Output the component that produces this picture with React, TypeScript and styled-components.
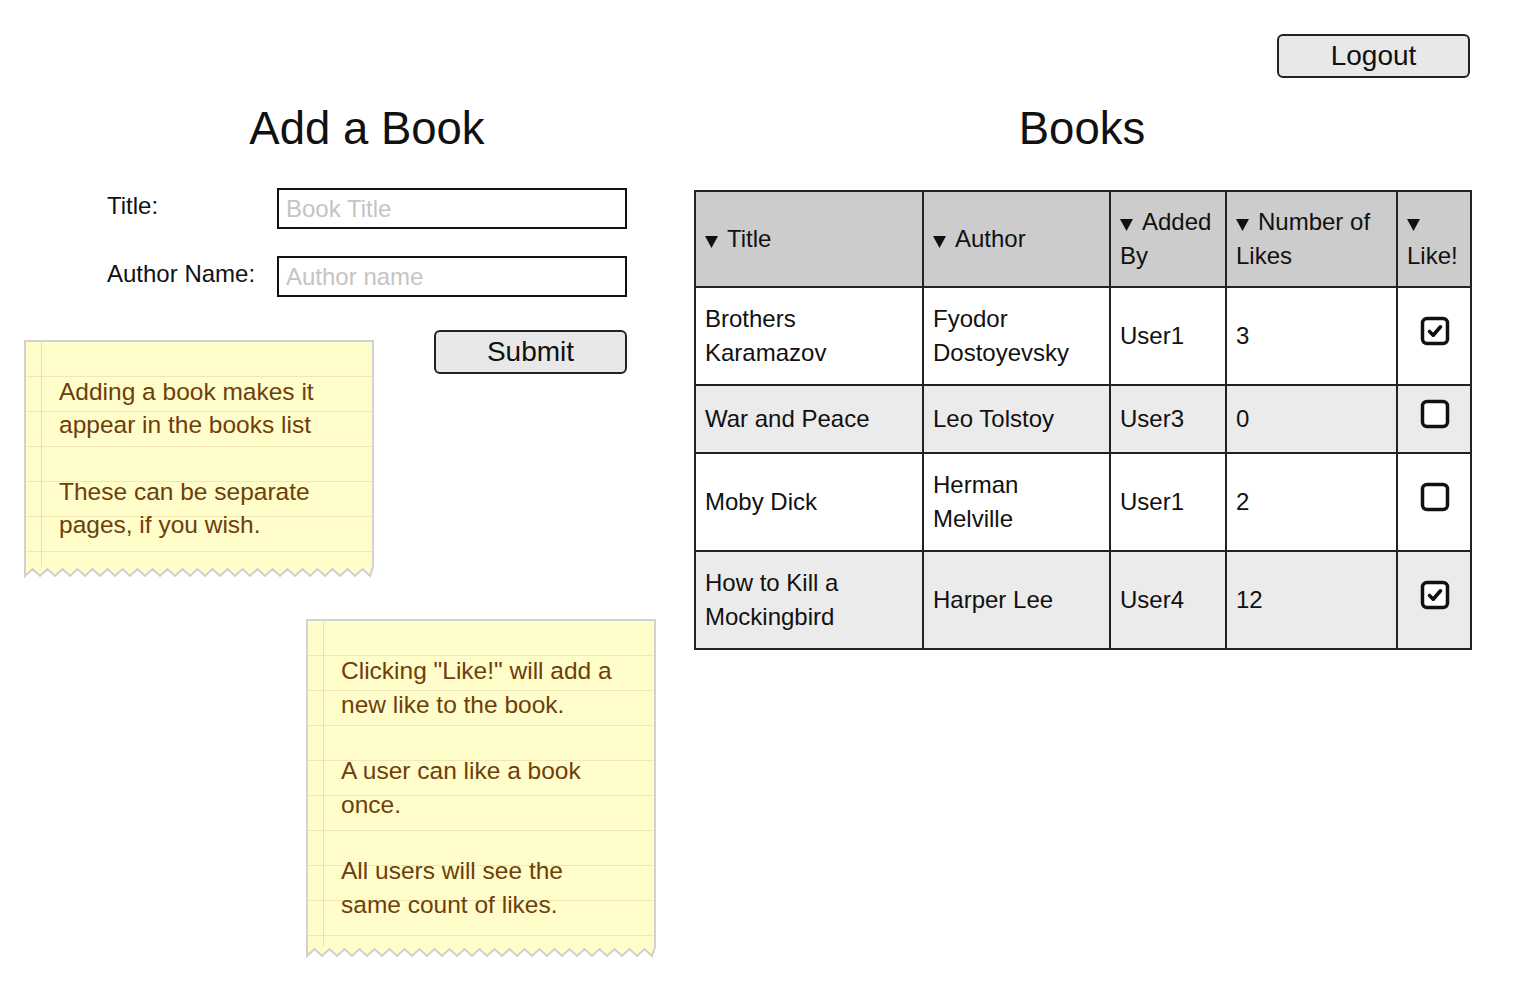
import React from 'react';
import styled, { createGlobalStyle } from 'styled-components';

const GlobalStyle = createGlobalStyle`
  body {
    margin: 0;
    background: #ffffff;
    color: #111111;
    font-family: "Liberation Sans", Arial, sans-serif;
  }
`;

const Page = styled.div`
  padding: 34px 55px 30px 24px;
`;

const TopBar = styled.div`
  display: flex;
  justify-content: flex-end;
`;

const Button = styled.button<{ $width: number }>`
  width: ${(p) => p.$width}px;
  height: 44px;
  background: #e8e8e8;
  border: 2px solid #222222;
  border-radius: 6px;
  font-family: inherit;
  font-size: 28px;
  color: #111111;
  padding: 0;
  cursor: pointer;
`;

const Columns = styled.div`
  display: flex;
  gap: 38px;
  align-items: flex-start;
`;

const LeftColumn = styled.section`
  width: 632px;
  display: flex;
  flex-direction: column;
`;

const RightColumn = styled.section`
  width: 776px;
  display: flex;
  flex-direction: column;
`;

const Heading = styled.h1<{ $inset?: number }>`
  margin: 25px 0 0;
  padding-left: ${(p) => p.$inset ?? 0}px;
  width: ${(p) => (p.$inset ? '520px' : 'auto')};
  box-sizing: content-box;
  font-size: 45.5px;
  line-height: 52px;
  font-weight: normal;
  text-align: center;
`;

const Form = styled.div`
  margin: 33px 0 0 83px;
  display: grid;
  grid-template-columns: 170px 350px;
  row-gap: 27px;
  align-items: center;
`;

const Label = styled.label`
  font-size: 24px;
  line-height: 28px;
  margin-top: -5px;
`;

const Input = styled.input`
  box-sizing: border-box;
  height: 41px;
  width: 100%;
  border: 2px solid #111111;
  border-radius: 0;
  padding: 0 7px;
  font-family: inherit;
  font-size: 24px;
  color: #111111;
  outline: none;

  &::placeholder {
    color: #c4c4c4;
  }
`;

const NoteRow = styled.div`
  margin-top: 33px;
  padding-right: 29px;
  display: flex;
  justify-content: space-between;
  align-items: flex-start;
`;

const Note = styled.div<{ $top: number; $left?: number }>`
  width: 350px;
  margin-top: ${(p) => p.$top}px;
  margin-left: ${(p) => p.$left ?? 0}px;
  display: flex;
  flex-direction: column;
`;

const NoteBody = styled.div`
  border: 2px solid #d2d2d2;
  border-bottom: none;
  padding: 33px 35px 26px 33px;
  background-color: #fffdc9;
  background-image:
    linear-gradient(to right, transparent 0 15px, #f6dcaa 15px 16px, transparent 16px),
    repeating-linear-gradient(to bottom, transparent 0 34px, #efe7b6 34px 35px);
  color: #6e3e0c;
  font-size: 24.5px;
  line-height: 33.3px;
`;

const NoteLine = styled.p<{ $gap?: boolean }>`
  margin: ${(p) => (p.$gap ? '33.3px' : '0')} 0 0;
`;

const Table = styled.table`
  margin-top: 35px;
  width: 776px;
  table-layout: fixed;
  border-collapse: collapse;
  border: 2px solid #222222;
  font-size: 24px;
  line-height: 34px;
`;

const HeadCell = styled.th`
  background: #cccccc;
  border: 2px solid #222222;
  padding: 13px 6px 13px 9px;
  text-align: left;
  font-weight: normal;
  vertical-align: middle;
`;

const Row = styled.tr<{ $shaded: boolean }>`
  background: ${(p) => (p.$shaded ? '#ebebeb' : '#ffffff')};
`;

const Cell = styled.td<{ $center?: boolean }>`
  border: 2px solid #222222;
  padding: 14px 8px 14px 9px;
  height: 38px;
  vertical-align: middle;
  text-align: ${(p) => (p.$center ? 'center' : 'left')};
`;

const CaretIcon = styled.svg`
  width: 13px;
  height: 12px;
  margin-right: 9px;
  vertical-align: -1px;
`;

const CheckIcon = styled.svg`
  display: block;
  margin: -10px auto 0;
  width: 30px;
  height: 30px;
`;

const ZigzagSvg = styled.svg`
  display: block;
`;

const Caret = () => (
  <CaretIcon viewBox="0 0 13 12">
    <polygon points="0,0 13,0 6.5,12" fill="#111" />
  </CaretIcon>
);

const Check = ({ checked }: { checked: boolean }) => (
  <CheckIcon viewBox="0 0 30 30">
    <rect x="2.5" y="2.5" width="25" height="25" rx="4.5" fill="#fff" stroke="#111" strokeWidth="3.5" />
    {checked && (
      <path d="M9.5 15.5 L13.2 19.2 L20.5 10.8" fill="none" stroke="#111" strokeWidth="3.6" strokeLinecap="round" strokeLinejoin="round" />
    )}
  </CheckIcon>
);

const Zigzag = ({ width }: { width: number }) => {
  const step = 15;
  const pts: string[] = [];
  for (let x = 0; x <= width; x += step / 2) {
    const down = Math.round(x / (step / 2)) % 2 === 0;
    pts.push(`${x + 1},${down ? 9 : 2}`);
  }
  const edge = `1,0 ${pts.join(' ')} ${width - 1},0`;
  return (
    <ZigzagSvg width={width} height={11} viewBox={`0 0 ${width} 11`}>
      <polygon points={`0,0 ${pts.join(' ')} ${width},0`} fill="#fffdc9" />
      <polyline points={edge} fill="none" stroke="#cfcfcf" strokeWidth="2" />
    </ZigzagSvg>
  );
};

const books = [
  { title: 'Brothers Karamazov', author: 'Fyodor Dostoyevsky', by: 'User1', likes: 3, liked: true },
  { title: 'War and Peace', author: 'Leo Tolstoy', by: 'User3', likes: 0, liked: false },
  { title: 'Moby Dick', author: 'Herman Melville', by: 'User1', likes: 2, liked: false },
  { title: 'How to Kill a Mockingbird', author: 'Harper Lee', by: 'User4', likes: 12, liked: true },
];

const columns = [
  { label: 'Title', width: 228 },
  { label: 'Author', width: 187 },
  { label: 'Added By', width: 116 },
  { label: 'Number of Likes', width: 171 },
  { label: 'Like!', width: 74 },
];

const App = () => {
  return (
    <Page>
      <GlobalStyle />
      <TopBar>
        <Button $width={193}>Logout</Button>
      </TopBar>
      <Columns>
        <LeftColumn>
          <Heading $inset={83}>Add a Book</Heading>
          <Form>
            <Label>Title:</Label>
            <Input placeholder="Book Title" />
            <Label>Author Name:</Label>
            <Input placeholder="Author name" />
          </Form>
          <NoteRow>
            <Note $top={10}>
              <NoteBody>
                <NoteLine>Adding a book makes it appear in the books list</NoteLine>
                <NoteLine $gap>These can be separate pages, if you wish.</NoteLine>
              </NoteBody>
              <Zigzag width={350} />
            </Note>
            <Button $width={193}>Submit</Button>
          </NoteRow>
          <Note $top={41} $left={282}>
            <NoteBody>
              <NoteLine>Clicking "Like!" will add a new like to the book.</NoteLine>
              <NoteLine $gap>A user can like a book once.</NoteLine>
              <NoteLine $gap>All users will see the same count of likes.</NoteLine>
            </NoteBody>
            <Zigzag width={350} />
          </Note>
        </LeftColumn>
        <RightColumn>
          <Heading>Books</Heading>
          <Table>
            <colgroup>
              {columns.map((c) => (
                <col key={c.label} style={{ width: c.width }} />
              ))}
            </colgroup>
            <thead>
              <tr>
                {columns.map((c) => (
                  <HeadCell key={c.label}>
                    <Caret />
                    {c.label}
                  </HeadCell>
                ))}
              </tr>
            </thead>
            <tbody>
              {books.map((b, i) => (
                <Row key={b.title} $shaded={i % 2 === 1}>
                  <Cell>{b.title}</Cell>
                  <Cell>{b.author}</Cell>
                  <Cell>{b.by}</Cell>
                  <Cell>{b.likes}</Cell>
                  <Cell $center>
                    <Check checked={b.liked} />
                  </Cell>
                </Row>
              ))}
            </tbody>
          </Table>
        </RightColumn>
      </Columns>
    </Page>
  );
};

export default App;
